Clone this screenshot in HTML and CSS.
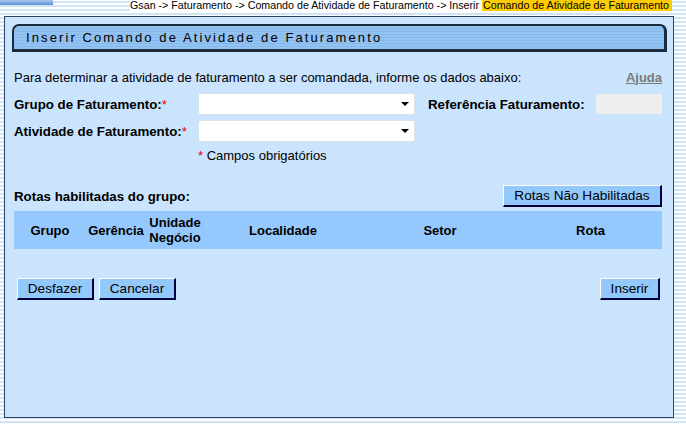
FILE: index.html
```html
<!DOCTYPE html>
<html>
<head>
<meta charset="utf-8">
<link rel="stylesheet" href="styles.css">
</head>
<body>
<div class="top">
  <div class="topbar"></div>
  <div class="crumb">Gsan -&gt; Faturamento -&gt; Comando de Atividade de Faturamento -&gt; Inserir <span class="hl">Comando de Atividade de Faturamento</span></div>
</div>
<div class="panel">
  <div class="titlebar">Inserir Comando de Atividade de Faturamento</div>
  <div class="intro">
    <span>Para determinar a atividade de faturamento a ser comandada, informe os dados abaixo:</span>
    <a class="help">Ajuda</a>
  </div>
  <div class="row r1">
    <span class="lbl">Grupo de Faturamento:<span class="req">*</span></span>
    <div class="sel"><span class="arrow"></span></div>
    <span class="lbl ref">Referência Faturamento:</span>
    <div class="ro"></div>
  </div>
  <div class="row r2">
    <span class="lbl">Atividade de Faturamento:<span class="req">*</span></span>
    <div class="sel"><span class="arrow"></span></div>
  </div>
  <div class="note"><span class="req">*</span> Campos obrigatórios</div>
  <div class="rotas">
    <span class="lbl">Rotas habilitadas do grupo:</span>
    <button class="btn wide">Rotas Não Habilitadas</button>
  </div>
  <div class="thead">
    <div>Grupo</div>
    <div>Gerência</div>
    <div>Unidade<br>Negócio</div>
    <div>Localidade</div>
    <div>Setor</div>
    <div>Rota</div>
  </div>
  <div class="actions">
    <div class="left">
      <button class="btn">Desfazer</button>
      <button class="btn">Cancelar</button>
    </div>
    <button class="btn ins">Inserir</button>
  </div>
</div>
</body>
</html>
```
FILE: styles.css
```css
html, body {
  margin: 0;
  padding: 0;
}
body {
  width: 686px;
  height: 425px;
  overflow: hidden;
  font-family: "Liberation Sans", Arial, sans-serif;
  color: #000;
  background: repeating-linear-gradient(to bottom, #ffffff 0px, #ffffff 1px, #cfe4f6 1px, #cfe4f6 3px, #ffffff 3px, #ffffff 4px);
}
.top {
  display: flex;
  justify-content: space-between;
  align-items: flex-start;
  height: 16px;
}
.topbar {
  width: 53px;
  height: 5px;
  background: linear-gradient(to bottom, #a9c8ee, #5f8fd2);
}
.crumb {
  font-size: 10.7px;
  line-height: 11px;
  margin-right: 14px;
  color: #000;
  background: #fff;
}
.hl {
  background: #ffcc00;
  padding: 0 3px 0 1px;
}
.panel {
  margin-left: 4px;
  width: 668px;
  height: 400px;
  border: 1px solid #2d4664;
  background: #cbe4fd;
}
.titlebar {
  margin: 7px 0 0 7px;
  height: 23px;
  width: 638px;
  border: 1px solid #1c2a3d;
  border-left-width: 2px;
  border-top-width: 2px;
  border-right-width: 3px;
  border-bottom-width: 3px;
  border-radius: 7px 7px 0 0;
  background: repeating-linear-gradient(to bottom, #92c3f2 0px, #92c3f2 2px, #86b8ea 2px, #86b8ea 3px);
  font-size: 13px;
  letter-spacing: 2.1px;
  line-height: 23px;
  padding-left: 12px;
}
.intro {
  display: flex;
  justify-content: space-between;
  align-items: center;
  margin: 17px 11px 0 9px;
  font-size: 13px;
  height: 16px;
}
.help {
  font-weight: bold;
  color: #7a7a7a;
  text-decoration: underline;
}
.lbl {
  font-weight: bold;
  font-size: 13.3px;
}
.req {
  color: #e00000;
  font-weight: normal;
}
.row {
  display: flex;
  align-items: center;
  padding-left: 9px;
  height: 22px;
}
.r1 { margin-top: 8px; }
.r2 { margin-top: 5px; }
.row > .lbl:first-child {
  width: 184px;
}
.sel {
  position: relative;
  width: 215px;
  height: 20px;
  background: #fff;
  border: 1px solid #d9e2ea;
  border-radius: 2px;
}
.arrow {
  position: absolute;
  right: 5px;
  top: 8px;
  border-left: 4px solid transparent;
  border-right: 4px solid transparent;
  border-top: 4px solid #000;
}
.ref {
  margin-left: 13px;
  width: 168px;
}
.ro {
  width: 66px;
  height: 20px;
  background: #eeeeee;
}
.note {
  font-size: 13px;
  margin: 6px 0 0 193px;
  height: 15px;
  line-height: 15px;
}
.rotas {
  display: flex;
  justify-content: space-between;
  align-items: center;
  margin: 22px 11px 0 9px;
  height: 22px;
}
.btn {
  font-family: "Liberation Sans", Arial, sans-serif;
  font-size: 13.6px;
  color: #000;
  background: #93c8fb;
  border-style: solid;
  border-color: #ffffff #00003a #00003a #ffffff;
  border-width: 1px 2px 2px 1px;
  height: 22px;
  padding: 0 10px;
  margin: 0;
  line-height: 18px;
}
.wide {
  width: 159px;
  padding: 0;
}
.ins {
  width: 60px;
  padding: 0;
}
.thead {
  display: grid;
  grid-template-columns: 72px 60px 58px 158px 156px 145px;
  margin: 4px 11px 0 9px;
  height: 38px;
  background: #95c9fd;
  align-items: center;
  font-weight: bold;
  font-size: 13px;
  text-align: center;
  line-height: 15px;
}
.actions {
  display: flex;
  justify-content: space-between;
  margin: 29px 13px 0 12px;
}
.left {
  display: flex;
  gap: 5px;
}
.left .btn {
  width: 77px;
  padding: 0;
}
```
